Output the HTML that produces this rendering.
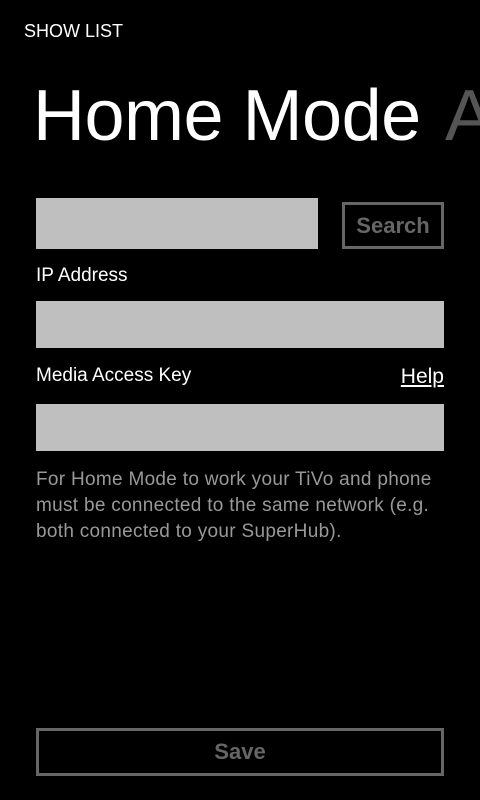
<!DOCTYPE html>
<html><head><style>
body{margin:0;width:480px;height:800px;background:#000;overflow:hidden;position:relative;font-family:"Liberation Sans",sans-serif;color:#fff}
.a{position:absolute;white-space:nowrap}
.box{position:absolute;background:#bfbfbf}
.btn{position:absolute;border:3px solid #666;box-sizing:border-box;color:#666;font-weight:bold;text-align:center}
</style></head><body>
<div class="a" style="left:24px;top:21px;font-size:18px">SHOW LIST</div>
<div class="a" style="left:33px;top:75px;font-size:72px;letter-spacing:-0.5px">Home Mode</div>
<div class="a" style="left:445px;top:75px;font-size:72px;color:#555">A</div>
<div class="box" style="left:36px;top:198px;width:282px;height:51px"></div>
<div class="btn" style="left:342px;top:202px;width:102px;height:47px;font-size:22px;line-height:41px">Search</div>
<div class="a" style="left:36px;top:265px;font-size:19px">IP Address</div>
<div class="box" style="left:36px;top:301px;width:408px;height:47px"></div>
<div class="a" style="left:36px;top:365px;font-size:19px">Media Access Key</div>
<div class="a" style="right:36px;top:365px;font-size:21px;text-decoration:underline">Help</div>
<div class="box" style="left:36px;top:404px;width:408px;height:47px"></div>
<div class="a" style="left:36px;top:467px;font-size:19px;line-height:26px;color:#999;letter-spacing:0.3px">For Home Mode to work your TiVo and phone<br>must be connected to the same network (e.g.<br>both connected to your SuperHub).</div>
<div class="btn" style="left:36px;top:728px;width:408px;height:48px;font-size:22px;line-height:42px">Save</div>
</body></html>
